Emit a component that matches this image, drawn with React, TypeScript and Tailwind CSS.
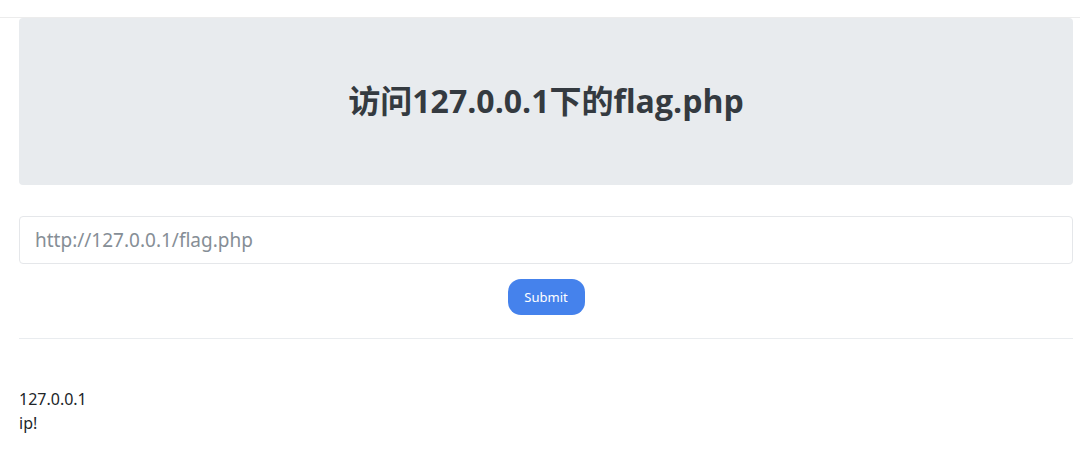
import React from "react";

export default function App() {
  return (
    <div
      className="min-h-screen bg-white text-[#212529]"
      style={{ fontFamily: '"Noto Sans", "Noto Sans CJK SC", sans-serif' }}
    >
      {/* thin top bar */}
      <div className="h-[18px] border-b border-[#ececec]" />
      <div className="ml-[19px] mr-[7px]">
        <div className="h-[167px] bg-[#e8ebee] rounded-[4px] flex items-center justify-center">
          <h1
            className="text-[32px] font-bold text-[#343a40] leading-none -mt-[2px]"
            style={{ fontFamily: '"Open Sans", "Noto Sans CJK SC", sans-serif' }}
          >
            访问127.0.0.1下的flag.php
          </h1>
        </div>
        <form className="mt-[31px] flex flex-col items-center" onSubmit={(e) => e.preventDefault()}>
          <input
            type="text"
            placeholder="http://127.0.0.1/flag.php"
            className="w-full h-[48px] px-[15px] border border-[#e5e7ea] rounded-[4px] text-[19px] text-[#495057] placeholder:text-[#868e96] outline-none"
          />
          <button
            type="submit"
            className="mt-[15px] w-[77px] h-[36px] rounded-[13px] bg-[#4582ec] text-white text-[13px] pt-[1px]"
          >
            Submit
          </button>
        </form>
        <hr className="mt-[23px] border-t border-[#e9ecef]" />
        <div className="mt-[48px] text-[16px] leading-[24px] text-[#212529]">
          <div>127.0.0.1</div>
          <div>ip!</div>
        </div>
      </div>
    </div>
  );
}
